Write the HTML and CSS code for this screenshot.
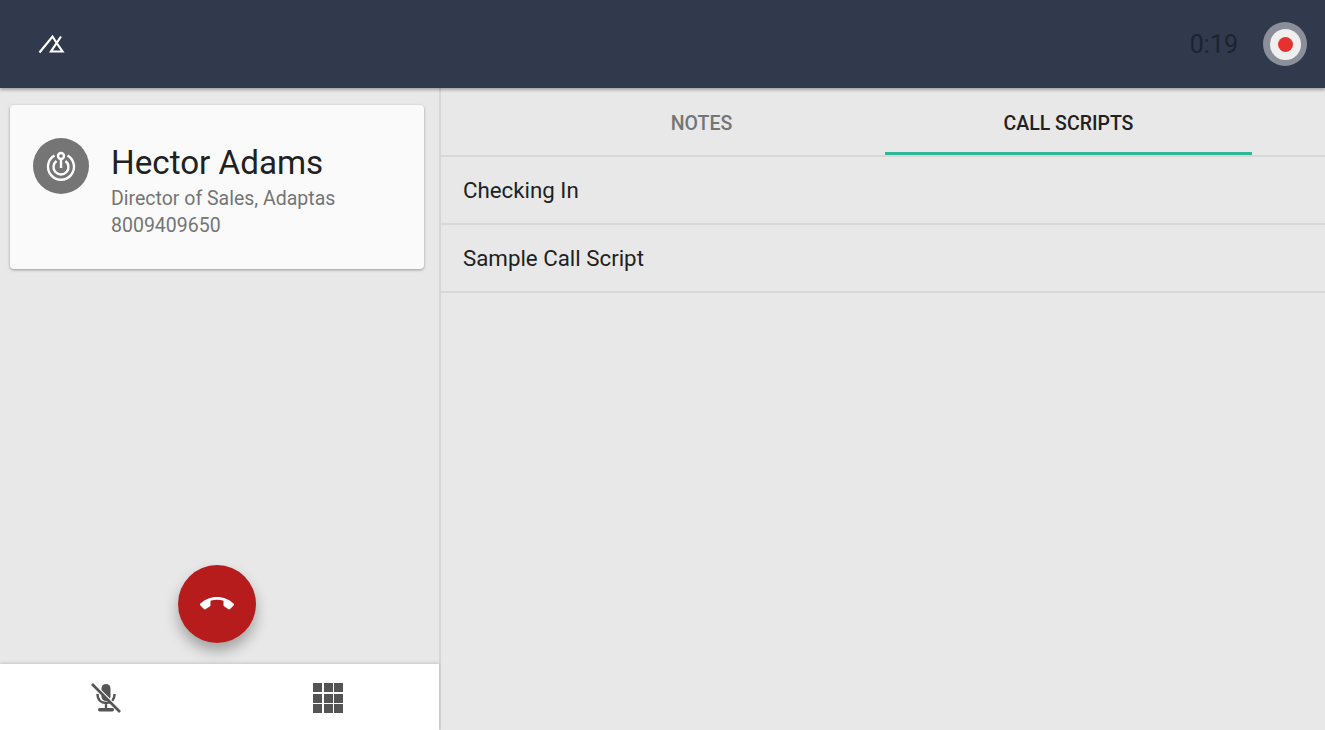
FILE: index.html
```html
<!DOCTYPE html>
<html lang="en">
<head>
  <meta charset="UTF-8" />
  <title>Call</title>
  <link rel="stylesheet" href="styles.css">
</head>
<body>

  <header class="topbar">
    <svg class="logo" width="28" height="20" viewBox="0 0 28 20">
      <path d="M1.5 18.5 L14.5 2.5 L19 9.5 M23 2.5 L13 17.5 H24.5 L19 9.5" />
    </svg>
    <span class="timer">0:19</span>
    <span class="record"><span class="record-inner"><span class="record-dot"></span></span></span>
  </header>

  <main class="call-view">
    <section class="left-col">
      <div class="contact-card">
        <div class="avatar">
          <svg width="32" height="32" viewBox="0 0 32 32">
            <path class="ring" d="M9.5 5.5 A13 13 0 1 0 22.5 5.5" />
            <path class="ring" d="M11.5 11 A7.5 7.5 0 1 0 20.5 11" />
            <path class="ring" d="M16 9 V18" />
            <circle class="ring" cx="16" cy="6" r="3" />
          </svg>
        </div>
        <div class="contact-info">
          <div class="contact-name">Hector Adams</div>
          <div class="contact-sub">Director of Sales, Adaptas</div>
          <div class="contact-sub">8009409650</div>
        </div>
      </div>

      <button class="hangup">
        <svg width="34" height="34" viewBox="0 0 24 24">
          <path d="M12 9c-1.6 0-3.15.25-4.6.72v3.1c0 .39-.23.74-.56.9-.98.49-1.87 1.12-2.66 1.85-.18.18-.43.28-.7.28-.28 0-.53-.11-.71-.29L.29 13.08c-.18-.17-.29-.42-.29-.7 0-.28.11-.53.29-.71C3.34 8.78 7.46 7 12 7s8.66 1.78 11.71 4.67c.18.18.29.43.29.71 0 .28-.11.53-.29.71l-2.48 2.48c-.18.18-.43.29-.71.29-.27 0-.52-.11-.7-.28-.79-.74-1.69-1.36-2.67-1.85-.33-.16-.56-.51-.56-.9v-3.1C15.15 9.25 13.6 9 12 9z" />
        </svg>
      </button>

      <div class="bottom-bar">
        <svg class="mic" width="32" height="32" viewBox="0 0 32 32">
          <rect x="11.5" y="2" width="9" height="17" rx="4.5" />
          <path class="mic-line" d="M7.5 12 C7.5 18 11 21 16 21 C21 21 24.5 18 24.5 12 M16 21 V27" />
          <rect x="8" y="26" width="16" height="3.5" rx="1.7" />
          <path class="mic-gap" d="M3.5 1.5 L30.5 28.5" />
          <path class="mic-slash" d="M2 2 L30 30" />
        </svg>
        <div class="dialpad">
          <i></i><i></i><i></i>
          <i></i><i></i><i></i>
          <i></i><i></i><i></i>
        </div>
      </div>
    </section>

    <section class="right-col">
      <div class="tabs">
        <div class="tab">NOTES</div>
        <div class="tab active">CALL SCRIPTS</div>
      </div>
      <div class="script-row">Checking In</div>
      <div class="script-row">Sample Call Script</div>
    </section>
  </main>

</body>
</html>
```

FILE: styles.css
```css
* {
  box-sizing: border-box;
}

body {
  margin: 0;
  height: 730px;
  overflow: hidden;
  display: flex;
  flex-direction: column;
  font-family: Roboto, sans-serif;
  background-color: #e8e8e8;
  color: #212121;
}

.topbar {
  height: 88px;
  flex-shrink: 0;
  display: flex;
  align-items: center;
  padding: 0 18px 0 38px;
  background-color: #31394d;
  box-shadow: 0 2px 3px rgba(0,0,0,0.3);
  position: relative;
  z-index: 2;
}

.logo {
  fill: none;
  stroke: #fff;
  stroke-width: 2.2;
  margin-top: -1px;
}

.timer {
  margin-left: auto;
  font-size: 25px;
  color: #1c2331;
  margin-right: 25px;
  margin-top: 1px;
}

.record {
  width: 44px;
  height: 44px;
  border-radius: 50%;
  background-color: #8a8f99;
  display: flex;
  align-items: center;
  justify-content: center;
}

.record-inner {
  width: 31px;
  height: 31px;
  border-radius: 50%;
  background-color: #efefef;
  display: flex;
  align-items: center;
  justify-content: center;
}

.record-dot {
  width: 15px;
  height: 15px;
  border-radius: 50%;
  background-color: #e53231;
}

.call-view {
  flex: 1;
  display: flex;
  min-height: 0;
}

.left-col {
  width: 441px;
  flex-shrink: 0;
  display: flex;
  flex-direction: column;
  border-right: 2px solid #d6d6d6;
  padding-top: 17px;
}

.contact-card {
  height: 164px;
  margin: 0 15px 0 10px;
  padding: 33px 23px;
  display: flex;
  background-color: #fafafa;
  border-radius: 4px;
  box-shadow: 0 1px 3px rgba(0,0,0,0.35);
}

.avatar {
  width: 56px;
  height: 56px;
  flex-shrink: 0;
  border-radius: 50%;
  background-color: #757575;
  display: flex;
  align-items: center;
  justify-content: center;
}

.ring {
  fill: none;
  stroke: #fff;
  stroke-width: 2.4;
}

.contact-info {
  margin-left: 22px;
}

.contact-name {
  font-size: 33.2px;
  line-height: 40px;
  margin-top: 5px;
  margin-bottom: 2px;
}

.contact-sub {
  font-size: 19.5px;
  line-height: 27px;
  color: #757575;
}

.hangup {
  width: 78px;
  height: 78px;
  margin: auto 0 21px 178px;
  padding: 0;
  border: none;
  border-radius: 50%;
  background-color: #b71c1c;
  box-shadow: 0 8px 14px rgba(0,0,0,0.3);
  display: flex;
  align-items: center;
  justify-content: center;
}

.hangup svg {
  fill: #fff;
}

.bottom-bar {
  height: 66px;
  display: flex;
  align-items: center;
  padding: 2px 0 0 90px;
  background-color: #fff;
  box-shadow: 0 -1px 3px rgba(0,0,0,0.15);
}

.mic {
  fill: #555;
}

.mic-line {
  fill: none;
  stroke: #555;
  stroke-width: 2.4;
}

.mic-gap {
  stroke: #fff;
  stroke-width: 2;
}

.mic-slash {
  stroke: #555;
  stroke-width: 2.6;
}

.dialpad {
  margin-left: 191px;
  display: grid;
  grid-template-columns: repeat(3, 9px);
  grid-auto-rows: 9px;
  gap: 1.5px;
}

.dialpad i {
  background-color: #555;
}

.right-col {
  flex: 1;
  padding-top: 3px;
}

.tabs {
  height: 66px;
  display: flex;
  padding: 0 73px 0 77px;
  border-bottom: 2px solid #d8d8d8;
}

.tab {
  flex: 1;
  text-align: center;
  padding-top: 21px;
  font-size: 19.5px;
  font-weight: 500;
  color: #757575;
}

.tab.active {
  color: #212121;
  height: 64px;
  border-bottom: 3px solid #2fb79a;
}

.script-row {
  height: 68px;
  padding: 0 22px;
  display: flex;
  align-items: center;
  font-size: 22.3px;
  border-bottom: 2px solid #d8d8d8;
}
```
